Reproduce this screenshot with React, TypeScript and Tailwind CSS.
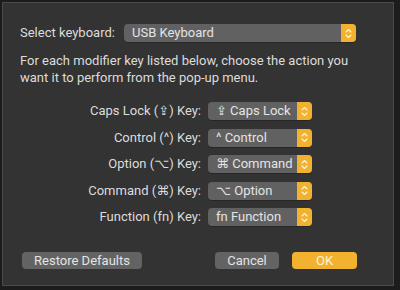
const font = { fontFamily: 'Roboto, "DejaVu Sans", sans-serif' };

function Stepper() {
  return (
    <div className="w-[15px] self-stretch bg-[#f2b22f] rounded-r-[4px] flex items-center justify-center">
      <svg width="7" height="11" viewBox="0 0 7 11" fill="none" stroke="#fff6dc" strokeWidth="1.1" strokeLinecap="round" strokeLinejoin="round">
        <path d="M1 4 L3.5 1.5 L6 4" />
        <path d="M1 7 L3.5 9.5 L6 7" />
      </svg>
    </div>
  );
}

function Popup({ label, width }: { label: string; width: string }) {
  return (
    <div className={`${width} h-[18px] flex rounded-[4px] bg-[#616161] shadow-[0_1px_0_rgba(0,0,0,0.25)]`}>
      <span className="flex-1 pl-[8px] text-[13px] leading-[18px] text-[#e4e4e4] whitespace-nowrap overflow-hidden">{label}</span>
      <Stepper />
    </div>
  );
}

const rows = [
  { key: 'Caps Lock (⇪) Key:', value: '⇪ Caps Lock' },
  { key: 'Control (^) Key:', value: '^ Control' },
  { key: 'Option (⌥) Key:', value: '⌘ Command' },
  { key: 'Command (⌘) Key:', value: '⌥ Option' },
  { key: 'Function (fn) Key:', value: 'fn Function' },
];

export default function App() {
  return (
    <div className="w-[400px] h-[290px] bg-[#1c1c1c] pt-[2px] pl-[2px] pr-[6px] pb-[4px]" style={font}>
      <div className="h-full border border-[#4a4a4a] bg-[#333333] flex flex-col pl-[17px] pr-[36px] pt-[21px]">
        <div className="flex items-center h-[18px]">
          <span className="w-[104px] shrink-0 whitespace-nowrap text-[13px] text-[#dcdcdc]">Select keyboard:</span>
          <Popup label="USB Keyboard" width="w-[232px]" />
        </div>

        <p className="mt-[10px] text-[13px] leading-[17px] text-[#dcdcdc] pr-[2px]">
          For each modifier key listed below, choose the action you want it to perform from the pop-up menu.
        </p>

        <div className="mt-[16px] flex flex-col gap-[8.5px]">
          {rows.map((r) => (
            <div key={r.key} className="flex items-center h-[18px]">
              <span className="w-[181px] shrink-0 text-right text-[13px] text-[#dcdcdc] whitespace-nowrap">{r.key}</span>
              <div className="ml-[7px]">
                <Popup label={r.value} width="w-[104px]" />
              </div>
            </div>
          ))}
        </div>

        <div className="mt-[26px] flex items-center">
          <button className="ml-[2px] w-[120px] h-[17px] rounded-[4px] bg-[#636363] text-[13px] leading-[17px] text-[#e4e4e4]">Restore Defaults</button>
          <div className="flex-1" />
          <button className="w-[64px] h-[17px] rounded-[4px] bg-[#636363] text-[13px] leading-[17px] text-[#e4e4e4]">Cancel</button>
          <button className="ml-[13px] w-[65px] h-[17px] rounded-[4px] bg-[#f2b22f] text-[13px] leading-[17px] text-[#fff3d6]">OK</button>
        </div>
      </div>
    </div>
  );
}
